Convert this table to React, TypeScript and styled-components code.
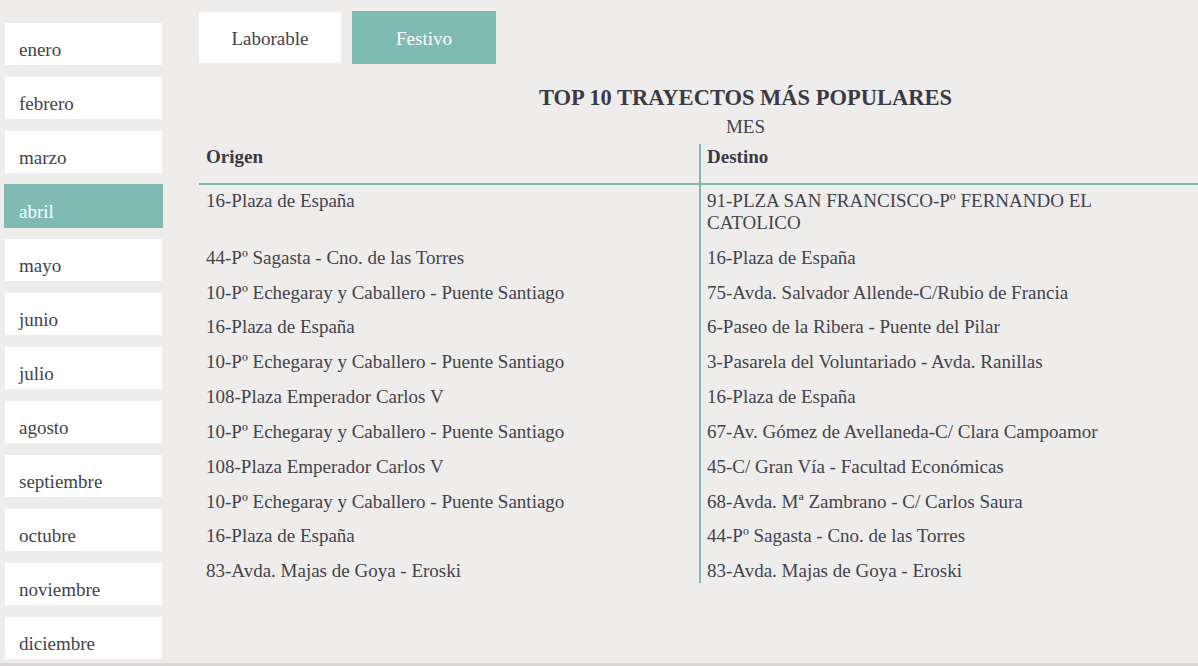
import React from "react";
import styled, { createGlobalStyle } from "styled-components";

const SERIF = `"Liberation Serif", "Times New Roman", serif`;

const Global = createGlobalStyle`
  html, body { margin: 0; padding: 0; background: #eeedec; }
  body { font-family: ${SERIF}; color: #44434b; }
  * { box-sizing: border-box; }
`;

const TEAL = "#7fbab3";

const Page = styled.div`
  display: flex;
  height: 666px;
  overflow: hidden;
  border-bottom: 3px solid #dcd7d7;
  font-family: ${SERIF};
  font-size: 19px;
`;

const Sidebar = styled.nav`
  width: 199px;
  flex: none;
  padding: 22px 0 0 4px;
  display: flex;
  flex-direction: column;
  gap: 10px;
`;

const MonthButton = styled.div<{ $active?: boolean }>`
  width: 159px;
  height: 44px;
  flex: none;
  border: 1px solid ${p => (p.$active ? TEAL : "transparent")};
  background: ${p => (p.$active ? TEAL : "#fff")};
  background-clip: padding-box;
  color: ${p => (p.$active ? "#fff" : "#44434b")};
  font-size: 19px;
  line-height: 22px;
  padding: 16px 14px 0;
  white-space: nowrap;
`;

const Main = styled.main`
  flex: 1;
  display: flex;
  flex-direction: column;
  padding-top: 11px;
`;

const Tabs = styled.div`
  display: flex;
  gap: 10px;
  align-items: flex-start;
`;

const Tab = styled.div<{ $active?: boolean }>`
  width: ${p => (p.$active ? 144 : 142)}px;
  height: ${p => (p.$active ? 53 : 51)}px;
  margin-top: ${p => (p.$active ? 0 : 1)}px;
  margin-left: ${p => (p.$active ? 1 : 0)}px;
  background: ${p => (p.$active ? TEAL : "#fff")};
  color: ${p => (p.$active ? "#fff" : "#44434b")};
  display: flex;
  align-items: center;
  justify-content: center;
  font-size: 19px;
  line-height: 22px;
  padding-top: 3px;
`;

const Heading = styled.div`
  padding-left: 94px;
  margin-top: 21px;
  text-align: center;
`;

const Title = styled.h1`
  margin: 0;
  font-size: 22.5px;
  line-height: 26px;
  font-weight: bold;
  color: #3b3a44;
`;

const Subtitle = styled.div`
  font-size: 19px;
  line-height: 22px;
  margin-top: 5px;
`;

const Table = styled.div`
  display: grid;
  grid-template-columns: 500px 1fr;
  margin-top: 6px;
`;

const HeadCell = styled.div<{ $right?: boolean }>`
  font-weight: bold;
  font-size: 19px;
  line-height: 22px;
  padding: 2px 7px 15px ${p => (p.$right ? 6 : 7)}px;
  border-bottom: 2px solid ${TEAL};
  border-left: ${p => (p.$right ? `2px solid ${TEAL}` : "none")};
  color: #3b3a44;
`;

const Cell = styled.div<{ $right?: boolean; $last?: boolean }>`
  font-size: 19px;
  line-height: 21.85px;
  padding: 5px 40px ${p => (p.$last ? 1 : 8)}px ${p => (p.$right ? 6 : 7)}px;
  border-left: ${p => (p.$right ? `2px solid ${TEAL}` : "none")};
`;

const months = [
  "enero", "febrero", "marzo", "abril", "mayo", "junio",
  "julio", "agosto", "septiembre", "octubre", "noviembre", "diciembre",
];

const rows: [string, string][] = [
  ["16-Plaza de España", "91-PLZA SAN FRANCISCO-Pº FERNANDO EL CATOLICO"],
  ["44-Pº Sagasta - Cno. de las Torres", "16-Plaza de España"],
  ["10-Pº Echegaray y Caballero - Puente Santiago", "75-Avda. Salvador Allende-C/Rubio de Francia"],
  ["16-Plaza de España", "6-Paseo de la Ribera - Puente del Pilar"],
  ["10-Pº Echegaray y Caballero - Puente Santiago", "3-Pasarela del Voluntariado - Avda. Ranillas"],
  ["108-Plaza Emperador Carlos V", "16-Plaza de España"],
  ["10-Pº Echegaray y Caballero - Puente Santiago", "67-Av. Gómez de Avellaneda-C/ Clara Campoamor"],
  ["108-Plaza Emperador Carlos V", "45-C/ Gran Vía - Facultad Económicas"],
  ["10-Pº Echegaray y Caballero - Puente Santiago", "68-Avda. Mª Zambrano - C/ Carlos Saura"],
  ["16-Plaza de España", "44-Pº Sagasta - Cno. de las Torres"],
  ["83-Avda. Majas de Goya - Eroski", "83-Avda. Majas de Goya - Eroski"],
];

export default function App() {
  return (
    <>
      <Global />
      <Page>
        <Sidebar>
          {months.map(m => (
            <MonthButton key={m} $active={m === "abril"}>{m}</MonthButton>
          ))}
        </Sidebar>
        <Main>
          <Tabs>
            <Tab>Laborable</Tab>
            <Tab $active>Festivo</Tab>
          </Tabs>
          <Heading>
            <Title>TOP 10 TRAYECTOS MÁS POPULARES</Title>
            <Subtitle>MES</Subtitle>
          </Heading>
          <Table>
            <HeadCell>Origen</HeadCell>
            <HeadCell $right>Destino</HeadCell>
            {rows.map(([o, d], i) => {
              const last = i === rows.length - 1;
              return (
                <React.Fragment key={i}>
                  <Cell $last={last}>{o}</Cell>
                  <Cell $right $last={last}>{d}</Cell>
                </React.Fragment>
              );
            })}
          </Table>
        </Main>
      </Page>
    </>
  );
}
